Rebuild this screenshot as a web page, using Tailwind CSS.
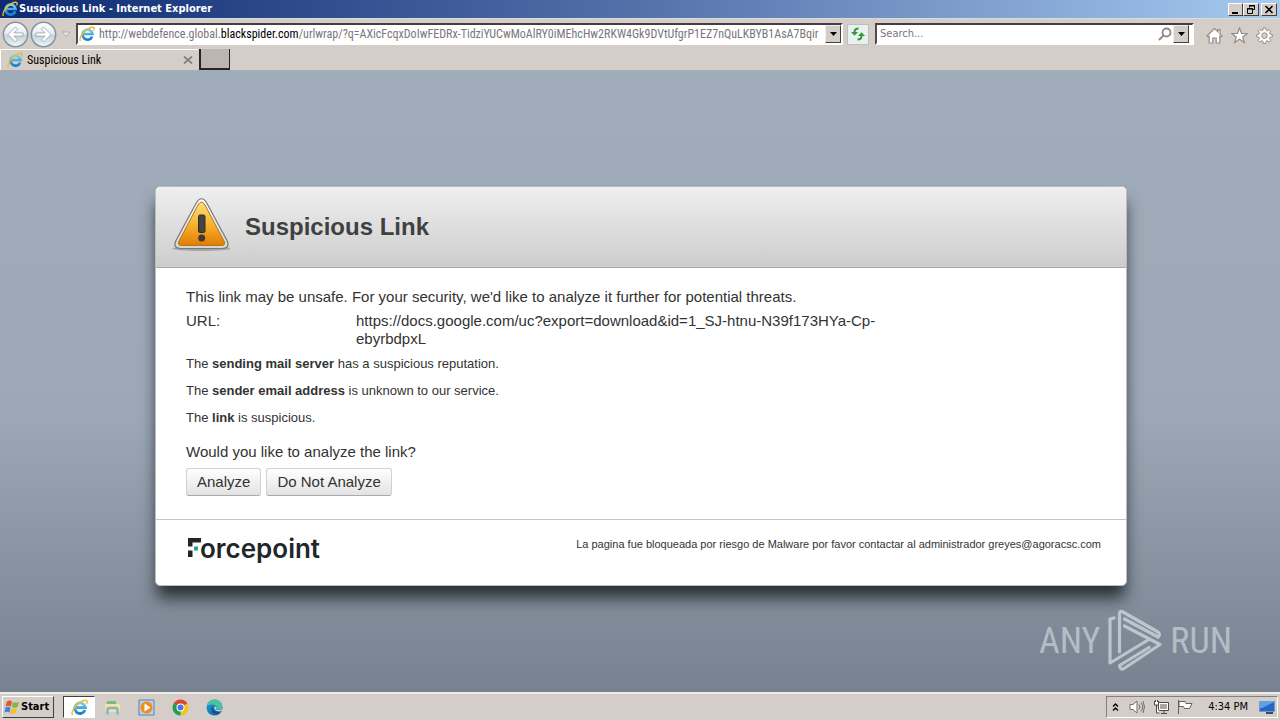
<!DOCTYPE html>
<html lang="en">
<head>
<meta charset="utf-8">
<title>Suspicious Link</title>
<script src="https://cdn.jsdelivr.net/npm/@tailwindcss/browser@4"></script>
</head>
<body class="flex h-screen flex-col overflow-hidden bg-[#d5cec8] font-['DejaVu_Sans_Condensed','DejaVu_Sans',sans-serif] text-[11px] text-black">

<svg class="absolute h-0 w-0" aria-hidden="true">
  <defs>
    <linearGradient id="blue" x1="0" y1="0" x2="0" y2="1"><stop offset="0" stop-color="#79d0f5"/><stop offset="1" stop-color="#1580cf"/></linearGradient>
    <linearGradient id="amber" x1="0" y1="0" x2="0" y2="1"><stop offset="0" stop-color="#fbdc83"/><stop offset=".5" stop-color="#f9b52f"/><stop offset="1" stop-color="#e07c05"/></linearGradient>
    <linearGradient id="rim" x1="0" y1="0" x2="0" y2="1"><stop offset="0" stop-color="#fff"/><stop offset="1" stop-color="#d5d5d5"/></linearGradient>
    <linearGradient id="orb" x1="0" y1="0" x2="0" y2="1"><stop offset="0" stop-color="#fff"/><stop offset=".48" stop-color="#e6ebee"/><stop offset=".52" stop-color="#c3d0d8"/><stop offset="1" stop-color="#eef8fb"/></linearGradient>
    <linearGradient id="edge" x1="0" y1="0" x2="1" y2="1"><stop offset="0" stop-color="#1e9fd8"/><stop offset="1" stop-color="#0b5aa8"/></linearGradient>
    <symbol id="ie" viewBox="0 0 16 16">
      <path d="M13.2 10.4A5 5 0 1 1 13.5 8H5" fill="none" stroke="url(#blue)" stroke-width="2.7"/>
      <path d="M1.5 15C-.4 12.6 3.600 6 9 2.800c3-1.800 6-2.100 6.200-.5.1.7-.2 1.500-.6 2.200" fill="none" stroke="#e9bd28" stroke-width="1.400"/>
    </symbol>
  </defs>
</svg>

<!-- Title bar -->
<header class="flex h-[18px] shrink-0 items-center bg-linear-to-r from-[#0d2a72] via-[#5571aa] to-[#a6caf0] pl-[2px] pr-[3px] text-white">
  <svg class="mr-[1px] h-4 w-4"><use href="#ie"/></svg>
  <h1 class="text-[11px] font-bold">Suspicious Link - Internet Explorer</h1>
  <div class="ml-auto flex">
    <button aria-label="Minimize" class="h-[13px] w-[15px] border border-b-[#404040] border-l-white border-r-[#404040] border-t-white bg-[#d5cec8]"><svg viewBox="0 0 13 11" class="h-[11px] w-[13px]"><path d="M3 8h6v2H3z"/></svg></button>
    <button aria-label="Restore" class="h-[13px] w-[16px] border border-b-[#404040] border-l-white border-r-[#404040] border-t-white bg-[#d5cec8]"><svg viewBox="0 0 14 11" class="h-[11px] w-[14px]" fill="none" stroke="#000"><path d="M5.500 3.500v-2h5v4h-2M5 2h6M3.500 4.500h5v5h-5zM3 5h6"/></svg></button>
    <button aria-label="Close" class="ml-[2px] h-[13px] w-[16px] border border-b-[#404040] border-l-white border-r-[#404040] border-t-white bg-[#d5cec8]"><svg viewBox="0 0 14 11" class="h-[11px] w-[14px]" stroke="#000" stroke-width="1.600"><path d="M3.500 2l7 7M10.500 2l-7 7"/></svg></button>
  </div>
</header>

<!-- Navigation row -->
<nav class="flex h-[31px] shrink-0 items-center border-t border-[#d8dcdc] pr-[7px]">
  <button aria-label="Back" class="ml-[2px]"><svg class="h-[27px] w-[27px]" viewBox="0 0 27 27"><circle cx="13.500" cy="13.500" r="12.200" fill="url(#orb)" stroke="#8494a3" stroke-width="1.500"/><path d="M13.500 6L6 13.500l7.500 7.500 2-2.200-3.600-3.700H21v-3.200h-9.100l3.600-3.700z" fill="#fff" stroke="#93a1af" stroke-width=".8"/></svg></button>
  <button aria-label="Forward" class="ml-[1px]"><svg class="h-[27px] w-[27px]" viewBox="0 0 27 27"><circle cx="13.500" cy="13.500" r="12.200" fill="url(#orb)" stroke="#8494a3" stroke-width="1.500"/><path d="M13.500 6l7.500 7.500-7.500 7.500-2-2.200 3.600-3.700H6v-3.200h9.100l-3.600-3.700z" fill="#fff" stroke="#93a1af" stroke-width=".8"/></svg></button>
  <button aria-label="Recent pages" class="ml-[4px]"><svg class="h-2 w-[10px]" viewBox="0 0 10 8"><path d="M1 2h8L5 6.500z" fill="#e9e5e2" stroke="#b2aca8"/></svg></button>
  <div class="ml-[5px] flex h-[22px] min-w-0 flex-1 items-center border-2 border-b-white border-l-[#55494a] border-r-white border-t-[#473c43] bg-white pl-[1px]">
    <svg class="h-4 w-4 shrink-0"><use href="#ie"/></svg>
    <div role="textbox" contenteditable="true" aria-label="Address" class="ml-[4px] min-w-0 flex-1 overflow-hidden whitespace-nowrap font-['Roboto_Condensed','Roboto',sans-serif] text-xs text-[#77777b]">http://webdefence.global.<span class="text-black">blackspider.com</span>/urlwrap/?q=AXicFcqxDoIwFEDRx-TidziYUCwMoAlRY0iMEhcHw2RKW4Gk9DVtUfgrP1EZ7nQuLKBYB1AsA7Bqir</div>
    <button aria-label="Show address list" class="ml-[3px] flex h-[18px] w-4 shrink-0 items-center justify-center border border-b-[#404040] border-l-[#eee] border-r-[#404040] border-t-[#eee] bg-[#d5cec8]"><svg class="h-1 w-[7px]" viewBox="0 0 7 4"><path d="M0 0h7L3.500 4z"/></svg></button>
  </div>
  <button aria-label="Refresh" class="ml-[4px] flex h-[21px] w-[22px] shrink-0 items-center justify-center border border-[#b9c0c4] bg-[#eaf0f2]"><svg class="h-4 w-4" viewBox="0 0 16 16" fill="none" stroke="#2e9a31" stroke-width="2"><path d="M8.500 2.500C6 2.500 4.500 3.500 4.500 6v1M7.500 13.500c2.500 0 4-1 4-3.500V9"/><path d="M1 6h7L4.500 9.800zM8 10h7l-3.500-3.800z" fill="#2e9a31" stroke="none"/></svg></button>
  <div class="ml-[6px] flex h-[22px] w-[319px] shrink-0 items-center border-2 border-b-white border-l-[#55494a] border-r-white border-t-[#473c43] bg-white pl-[3px] pr-[3px]">
    <input type="text" aria-label="Search" placeholder="Search..." class="min-w-0 flex-1 bg-transparent outline-none placeholder:text-[#77777b]">
    <button aria-label="Search"><svg class="h-[14px] w-[14px]" viewBox="0 0 14 14" fill="none" stroke="#8b8787" stroke-width="1.800"><circle cx="8.500" cy="5.500" r="4"/><path d="M5.500 8.500L1 13"/></svg></button>
    <button aria-label="Search options" class="ml-[1px] flex h-[18px] w-4 items-center justify-center border border-b-[#404040] border-l-[#eee] border-r-[#404040] border-t-[#eee] bg-[#d5cec8]"><svg class="h-1 w-[7px]" viewBox="0 0 7 4"><path d="M0 0h7L3.500 4z"/></svg></button>
  </div>
  <div class="ml-[12px] flex shrink-0 gap-2 pt-[3px]">
    <button aria-label="Home"><svg class="h-[17px] w-[17px]" viewBox="0 0 17 17" fill="#fff" stroke="#918d8b" stroke-width="1.200"><path d="M8.500 1.500L1 9l1.500 1 .7-.6V16h3.600v-5h3.400v5h3.600V9.400l.7.600L16 9l-2-2V2.500h-2v2.400z"/></svg></button>
    <button aria-label="Favorites"><svg class="h-[17px] w-[17px]" viewBox="0 0 17 17" fill="#fff" stroke="#918d8b" stroke-width="1.200"><path d="M8.500 1l2 5.300 5.700.2-4.500 3.500 1.600 5.500-4.800-3.200-4.800 3.200L5.300 10 .8 6.500l5.700-.2z"/></svg></button>
    <button aria-label="Tools"><svg class="h-[17px] w-[17px]" viewBox="0 0 17 17" fill="#fff" stroke="#918d8b"><path d="M7.300 1h2.400l.4 2.100 1.300.6 1.800-1.200 1.500 1.500-1.200 1.900.6 1.200 2.200.4v2.300l-2.200.4-.5 1.300 1.200 1.800-1.600 1.600-1.800-1.200-1.300.5-.4 2.200H7.300l-.4-2.200-1.300-.5-1.800 1.200-1.600-1.600 1.200-1.800-.5-1.300-2.200-.4V7.500l2.200-.4.6-1.200L2.300 4l1.500-1.500 1.800 1.200 1.300-.6z"/><circle cx="8.500" cy="8.600" r="2.800" fill="#d5cec8"/></svg></button>
  </div>
</nav>

<!-- Tabs -->
<div class="flex h-[22px] shrink-0 border-b border-[#a6adb2]">
  <div class="flex w-[198px] items-center border-l border-t border-white pl-[6px] pr-[5px]">
    <svg class="h-4 w-4"><use href="#ie"/></svg>
    <span class="ml-[4px] font-['Roboto_Condensed','Roboto',sans-serif] text-xs">Suspicious Link</span>
    <button aria-label="Close tab" class="ml-auto"><svg class="h-2 w-[10px]" viewBox="0 0 10 8" stroke="#85807d" stroke-width="1.800"><path d="M1 .5l8 7M9 .5l-8 7"/></svg></button>
  </div>
  <button aria-label="New tab" class="ml-[1px] h-[21px] w-[31px] border-b-2 border-l-2 border-r border-[#282426] bg-[#bdb5b1]"></button>
</div>

<!-- Web page -->
<main class="relative min-h-0 flex-1 bg-linear-to-b from-[#a0acb9] from-0% via-[#9ca8b6] via-55% to-[#76828f] px-[155px] pt-[115px] font-['Liberation_Sans',Arial,sans-serif] text-[#333]">
  <section class="mr-[-2px] overflow-visible rounded-[5px] border border-[#b8bdc2] bg-white shadow-[0_14px_16px_-2px_#293035]">
    <div class="flex h-[81px] items-center gap-[14px] rounded-t-[5px] border-b border-[#aaa] bg-linear-to-b from-[#efefef] to-[#cdcdcd] pl-4">
      <svg class="-mt-1 h-[56px] w-[59px]" viewBox="0 0 59 56">
        <ellipse cx="29.500" cy="51.500" rx="29" ry="2.500" fill="#777" opacity=".5"/>
        <path d="M24.500 5.500q5-7.500 10 0l20.500 38q3.500 7.500-4.500 8h-42q-8-.5-4.500-8z" fill="url(#rim)" stroke="#777" stroke-width="1.200"/>
        <path d="M26 8q3.500-6 7 0l19 36q2 4.500-2.500 4.500h-40Q5 48.500 7 44z" fill="url(#amber)" stroke="#b47614" stroke-width="1"/>
        <rect x="26.500" y="18" width="6.500" height="17.500" rx="1.500" fill="#45423f" stroke="#2e2c29"/>
        <circle cx="29.700" cy="41" r="3.500" fill="#3c3936"/>
      </svg>
      <h2 class="text-2xl font-bold text-[#404040]">Suspicious Link</h2>
    </div>
    <div class="h-[252px] border-b border-[#c5c5c5] px-[30px] pt-[20px]">
      <p class="text-[15px] leading-[18px]">This link may be unsafe. For your security, we'd like to analyze it further for potential threats.</p>
      <dl class="mt-[6px] flex text-[15px] leading-[18px]">
        <dt class="w-[170px]">URL:</dt>
        <dd>https://docs.google.com/uc?export=download&amp;id=1_SJ-htnu-N39f173HYa-Cp-<br>ebyrbdpxL</dd>
      </dl>
      <div class="mt-[7px] flex flex-col gap-[9px] text-[13px] leading-[18px]">
        <p>The <b>sending mail server</b> has a suspicious reputation.</p>
        <p>The <b>sender email address</b> is unknown to our service.</p>
        <p>The <b>link</b> is suspicious.</p>
      </div>
      <p class="mt-[16px] text-[15px] leading-[18px]">Would you like to analyze the link?</p>
      <div class="mt-[7px] flex gap-[5px] text-[15px]">
        <button class="h-7 rounded-[3px] border border-[#d2d2d2] border-b-[#aaa] bg-linear-to-b from-white to-[#e3e3e3] px-[10px]">Analyze</button>
        <button class="h-7 rounded-[3px] border border-[#d2d2d2] border-b-[#aaa] bg-linear-to-b from-white to-[#e3e3e3] px-[10px]">Do Not Analyze</button>
      </div>
    </div>
    <footer class="flex h-[65px] items-start justify-between pl-[32px] pr-[25px] pt-[13px]">
      <div class="flex text-[#20262a]" aria-label="Forcepoint">
        <svg class="mt-[5px] h-[20px] w-[13px]" viewBox="0 0 13 20"><path d="M0 0h13v4.500H4.500V8.500H0zM0 12.500h4.500V19H0z" fill="#20262a"/><path d="M6 8.500h4v4H6z" fill="#1ba58f"/></svg>
        <span class="-ml-px font-['Inter',sans-serif] text-[26px] font-semibold leading-8">orcepoint</span>
      </div>
      <p class="pt-[3px] text-[11px] leading-4">La pagina fue bloqueada por riesgo de Malware por favor contactar al administrador greyes@agoracsc.com</p>
    </footer>
  </section>
  <div class="absolute bottom-[19px] right-[48px] flex items-center gap-[7px] font-['Roboto_Condensed','Liberation_Sans_Narrow',sans-serif] text-[36px] leading-none text-[#c2cad2] opacity-80" aria-label="ANY RUN">
    <span>ANY</span>
    <svg class="h-[64px] w-[56px]" viewBox="0 0 56 64" fill="none" stroke="#cdd4db" stroke-width="3.200" stroke-linejoin="round" stroke-linecap="round"><path d="M7 9L3 10v44L41 31M12.500 43V5q0-4 3.500-2l35 20q3 2 0 5L17.500 10M17.500 17L53 35.500 17 59.500q-4 2-4.500-3L42 38.500"/></svg>
    <span>RUN</span>
  </div>
</main>

<!-- Taskbar -->
<footer class="flex h-7 shrink-0 items-center border-t-2 border-[#eeeae6] px-[2px]">
  <button class="flex h-[22px] w-[52px] items-center gap-[1px] border border-b-[#404040] border-l-white border-r-[#404040] border-t-white pl-[1px] font-bold">
    <svg class="h-4 w-4 shrink-0" viewBox="0 0 16 16"><path d="M3 2.500q2.500-2 5 0L7 7.500q-3-1.500-5.500 0z" fill="#e9542a"/><path d="M9 3q3 1.500 6 0l-1.500 5q-3 1.500-5.500 0z" fill="#77b942"/><path d="M1.500 8.500q2.500-1.500 5 0l-1 5q-2.500-1.500-5 0z" fill="#3d86d2"/><path d="M7.500 9q3 1.500 5.500 0l-1.500 5q-3 1.500-5.500 0z" fill="#f7bd2a"/></svg>
    <span>Start</span>
  </button>
  <button aria-label="Internet Explorer" class="ml-[9px] flex h-[22px] w-[32px] items-center justify-center border border-b-white border-l-[#404040] border-r-white border-t-[#404040] bg-white"><svg class="h-[17px] w-[17px]"><use href="#ie"/></svg></button>
  <div class="ml-[9px] flex gap-[17px]">
    <button aria-label="File Explorer"><svg class="h-[17px] w-[17px]" viewBox="0 0 17 17"><path d="M1 3h6l1 1h7v9H1z" fill="#e9c968"/><path d="M3 2h9v4H3z" fill="#79b987"/><path d="M1 5h15v8H1z" fill="#f5e29b"/><path d="M3.500 15.500V11q0-2 2-2h6q2 0 2 2v4.500" fill="none" stroke="#78b7df" stroke-width="2.500"/></svg></button>
    <button aria-label="Media Player"><svg class="h-[17px] w-[17px]" viewBox="0 0 17 17"><path d="M1 1h15v15H1z" fill="#b5d3ea" stroke="#5583aa"/><circle cx="8.500" cy="8.500" r="6" fill="#f58a1c"/><path d="M6.500 4.500l6 4-6 4z" fill="#fff"/></svg></button>
    <button aria-label="Chrome"><svg class="h-[17px] w-[17px]" viewBox="0 0 17 17"><path d="M8.500 8.500L1.600 4.500a8 8 0 0 1 13.800 0z" fill="#dd4434"/><path d="M8.500 8.500l6.900-4a8 8 0 0 1-6.900 12z" fill="#fbc116"/><path d="M8.500 8.500v8a8 8 0 0 1-6.900-12z" fill="#209d57"/><circle cx="8.500" cy="8.500" r="4" fill="#fff"/><circle cx="8.500" cy="8.500" r="3" fill="#3d7de5"/></svg></button>
    <button aria-label="Edge"><svg class="h-[17px] w-[17px]" viewBox="0 0 17 17"><circle cx="8.500" cy="8.500" r="8" fill="url(#edge)"/><path d="M1 6.500C2.500-1 16-2 16.500 8c0 3-4.500 3.500-6 2 2-3.500-3-6-9.500-3.500z" fill="#48c5a0"/><path d="M8 7c-3 3 0 7 6.500 5.500-3 4-9 2.500-9-2 0-2 1-3 2.500-3.500z" fill="#124e95"/><path d="M8.500 7.500c2.500-.5 2.500 1.500 1.500 2.500 1.500 1.500 5 1.500 6.500-.5l-1 2.500c-4 1.500-8-1-7-4.500z" fill="#d5cec8"/></svg></button>
  </div>
  <div class="ml-auto flex h-[22px] w-[172px] items-center border border-b-white border-l-[#858080] border-r-white border-t-[#858080] pl-[5px] pr-[2px]">
    <button aria-label="Show hidden icons"><svg class="h-2 w-[7px]" viewBox="0 0 7 8" fill="none" stroke="#000" stroke-width="1.400"><path d="M1 3.500l2.500-2.500L6 3.500M1 7.500L3.500 5 6 7.500"/></svg></button>
    <button aria-label="Volume" class="ml-[10px]"><svg class="h-4 w-4" viewBox="0 0 16 16" fill="#fff" stroke="#726e6b"><path d="M1 5.500h3L8 2v12l-4-3.500H1z"/><path d="M10 5.500q2 2.500 0 5M12 3.500q3.500 4.500 0 9M14 2q3 6 0 12" fill="none"/></svg></button>
    <button aria-label="Network" class="ml-[8px]"><svg class="h-4 w-4" viewBox="0 0 16 16" fill="#fff" stroke="#4d4a48"><path d="M5.500 3.500h10v8h-10z"/><path d="M7 5h7v5H7z" fill="#aaa6a3" stroke="none"/><path d="M1.500 2v4h4V2M2.500 1v2M4.500 1v2M3.500 6v8h3M8 14.500h6M11 12v2"/></svg></button>
    <button aria-label="Action Center" class="ml-[8px]"><svg class="h-4 w-4" viewBox="0 0 16 16" fill="#fff" stroke="#65615f"><path d="M1.500 1v14M2 2.500h6l1 2h6l-2.500 5H7.500l-1-2H2z"/></svg></button>
    <time class="ml-auto">4:34 PM</time>
    <button aria-label="Show desktop" class="ml-[11px]"><svg class="h-[15px] w-4" viewBox="0 0 16 15"><path d="M.5 1.500h15v10H.5z" fill="#2566c3" stroke="#7399cd"/><path d="M1 2h14L3 8H1z" fill="#5da2ed"/><path d="M7 12h7v2H7z" fill="#344b6c"/></svg></button>
  </div>
</footer>
</body>
</html>
